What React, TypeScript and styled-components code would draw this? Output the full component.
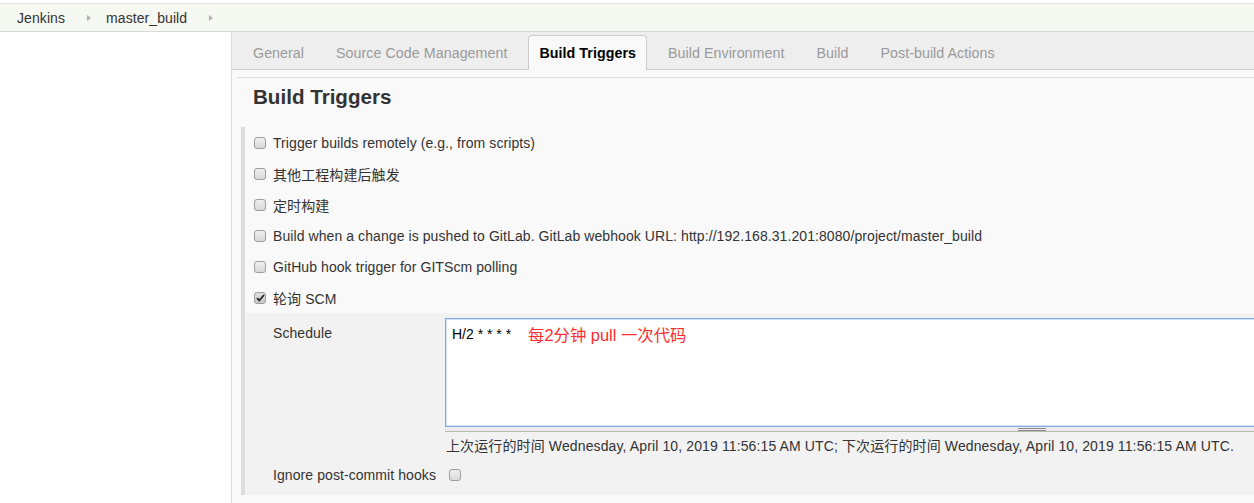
import styled, { createGlobalStyle } from "styled-components";

const GlobalStyle = createGlobalStyle`
  html, body {
    margin: 0;
    padding: 0;
    background: #fff;
    overflow: hidden;
  }
  body {
    font-family: "Liberation Sans", Arial, "Noto Sans CJK SC", sans-serif;
    font-size: 14px;
    letter-spacing: 0.08px;
    color: #333;
  }
`;

const Page = styled.div`
  width: 100vw;
  height: 503px;
  padding-top: 3px;
  box-sizing: border-box;
  overflow: hidden;
  display: flex;
  flex-direction: column;
`;

const Breadcrumbs = styled.div`
  height: 27px;
  flex-shrink: 0;
  display: flex;
  align-items: center;
  padding-left: 17px;
  background: #f6f8f2;
  border-top: 1px solid #e4e4e4;
  border-bottom: 1px solid #d9d9d9;
`;

const Crumb = styled.span`
  color: #333;
  font-size: 14px;
`;

const CrumbArrow = styled.span`
  width: 0;
  height: 0;
  margin: 0 15px 0 22px;
  border-left: 4px solid #b0b0b0;
  border-top: 3.5px solid transparent;
  border-bottom: 3.5px solid transparent;
`;

const Main = styled.div`
  flex: 1;
  display: flex;
  min-height: 0;
`;

const SidePanel = styled.div`
  width: 231px;
  flex-shrink: 0;
  border-right: 1px solid #dcdcdc;
  background: #fff;
`;

const ConfigPanel = styled.div`
  flex: 1;
  min-width: 0;
  background: #f9f9f9;
`;

const TabBar = styled.div`
  height: 37px;
  display: flex;
  align-items: flex-end;
  gap: 10px;
  padding-left: 10px;
  background: #eeeeee;
  border-bottom: 1px solid #cccccc;
`;

const Tab = styled.div<{ $active?: boolean }>`
  height: 35px;
  margin-bottom: -1px;
  padding: 0 10px 1px;
  display: flex;
  align-items: center;
  font-size: 14.25px;
  letter-spacing: 0.05px;
  white-space: nowrap;
  box-sizing: border-box;
  color: ${({ $active }) => ($active ? "#000" : "#9a9a9a")};
  font-weight: ${({ $active }) => ($active ? "bold" : "normal")};
  background: ${({ $active }) => ($active ? "#f9f9f9" : "transparent")};
  border: 1px solid ${({ $active }) => ($active ? "#cccccc" : "transparent")};
  border-bottom: none;
  border-radius: 4px 4px 0 0;
`;

const Content = styled.div`
  margin: 7px 0 0 5px;
  border-top: 1px solid #dddddd;
`;

const Heading = styled.h2`
  margin: 0;
  padding: 7px 0 0 16px;
  font-size: 20.6px;
  line-height: 24px;
  letter-spacing: 0;
  font-weight: bold;
  color: #333;
`;

const Section = styled.div`
  margin: 18px 0 0 4px;
  border-left: 4px solid #dddddd;
`;

const OptionRow = styled.label`
  height: 31px;
  display: flex;
  align-items: center;
  gap: 7px;
  padding-left: 9px;
  white-space: nowrap;
`;

const Box = styled.span<{ $checked?: boolean }>`
  width: 12px;
  height: 12px;
  flex-shrink: 0;
  box-sizing: border-box;
  display: inline-flex;
  align-items: center;
  justify-content: center;
  border: 1px solid #9c9c9c;
  border-radius: 3px;
  background: ${({ $checked }) =>
    $checked
      ? "linear-gradient(#dedede, #c8c8c8)"
      : "linear-gradient(#efefef, #d9d9d9)"};
`;

const Nested = styled.div`
  background: #f2f2f2;
  padding: 5px 0 5px 28px;
  display: grid;
  grid-template-columns: 172px auto;
`;

const FieldLabel = styled.div<{ $center?: boolean }>`
  padding-top: ${({ $center }) => ($center ? "0" : "7px")};
  display: flex;
  align-items: ${({ $center }) => ($center ? "center" : "flex-start")};
  white-space: nowrap;
`;

const EditorWrap = styled.div`
  position: relative;
  width: 1174px;
`;

const Editor = styled.textarea`
  display: block;
  width: 100%;
  height: 109px;
  margin: 0;
  box-sizing: border-box;
  padding: 7px 6px;
  border: 1px solid #7fa8e8;
  box-shadow: inset 0 0 0 1px #d5e3fa;
  background: #fff;
  color: #000;
  font-family: "Liberation Sans", Arial, sans-serif;
  font-size: 14px;
  line-height: 16px;
  resize: none;
  outline: none;
`;

const Annotation = styled.span`
  position: absolute;
  left: 83px;
  top: 8px;
  color: #ff2d2d;
  font-size: 16.4px;
  line-height: 19px;
  letter-spacing: 0;
  font-family: "Liberation Sans", "Noto Sans CJK SC", sans-serif;
  white-space: nowrap;
  pointer-events: none;
`;

const Handle = styled.div`
  height: 4px;
  border-bottom: 1px solid #b8b8b8;
  background: #ececec;
  display: flex;
  justify-content: center;
  align-items: center;
`;

const Grip = styled.span`
  width: 28px;
  height: 1px;
  border-top: 1px solid #8e8e8e;
  border-bottom: 1px solid #8e8e8e;
`;

const Status = styled.div`
  margin-top: 6px;
  padding-left: 1px;
  line-height: 16px;
  letter-spacing: 0.12px;
  white-space: nowrap;
  font-family: "Liberation Sans", "Noto Sans CJK SC", sans-serif;
`;

const CheckCell = styled.div`
  height: 30px;
  display: flex;
  align-items: center;
  padding-left: 4px;
`;

const Spacer = styled.div``;

const Checkbox = ({ checked }: { checked?: boolean }) => (
  <Box $checked={checked}>
    {checked && (
      <svg width="9" height="8" viewBox="0 0 9 8">
        <path d="M1 4.2 L3.3 6.5 L8 1" fill="none" stroke="#222" strokeWidth="1.8" />
      </svg>
    )}
  </Box>
);

const tabs = [
  "General",
  "Source Code Management",
  "Build Triggers",
  "Build Environment",
  "Build",
  "Post-build Actions",
];

const triggers = [
  { label: "Trigger builds remotely (e.g., from scripts)" },
  { label: "其他工程构建后触发" },
  { label: "定时构建" },
  {
    label:
      "Build when a change is pushed to GitLab. GitLab webhook URL: http://192.168.31.201:8080/project/master_build",
  },
  { label: "GitHub hook trigger for GITScm polling" },
  { label: "轮询 SCM", checked: true },
];

export default function App() {
  return (
    <Page>
      <GlobalStyle />
      <Breadcrumbs>
        <Crumb>Jenkins</Crumb>
        <CrumbArrow />
        <Crumb>master_build</Crumb>
        <CrumbArrow />
      </Breadcrumbs>
      <Main>
        <SidePanel />
        <ConfigPanel>
          <TabBar>
            {tabs.map((t) => (
              <Tab key={t} $active={t === "Build Triggers"}>
                {t}
              </Tab>
            ))}
          </TabBar>
          <Content>
            <Heading>Build Triggers</Heading>
            <Section>
              {triggers.map((t) => (
                <OptionRow key={t.label}>
                  <Checkbox checked={t.checked} />
                  <span>{t.label}</span>
                </OptionRow>
              ))}
              <Nested>
                <FieldLabel>Schedule</FieldLabel>
                <div>
                  <EditorWrap>
                    <Editor defaultValue="H/2 * * * *" spellCheck={false} />
                    <Annotation>每2分钟 pull 一次代码</Annotation>
                    <Handle>
                      <Grip />
                    </Handle>
                  </EditorWrap>
                </div>
                <Spacer />
                <Status>
                  上次运行的时间 Wednesday, April 10, 2019 11:56:15 AM UTC; 下次运行的时间
                  Wednesday, April 10, 2019 11:56:15 AM UTC.
                </Status>
                <FieldLabel $center style={{ marginTop: 6 }}>
                  Ignore post-commit hooks
                </FieldLabel>
                <CheckCell style={{ marginTop: 6 }}>
                  <Checkbox />
                </CheckCell>
              </Nested>
            </Section>
          </Content>
        </ConfigPanel>
      </Main>
    </Page>
  );
}
